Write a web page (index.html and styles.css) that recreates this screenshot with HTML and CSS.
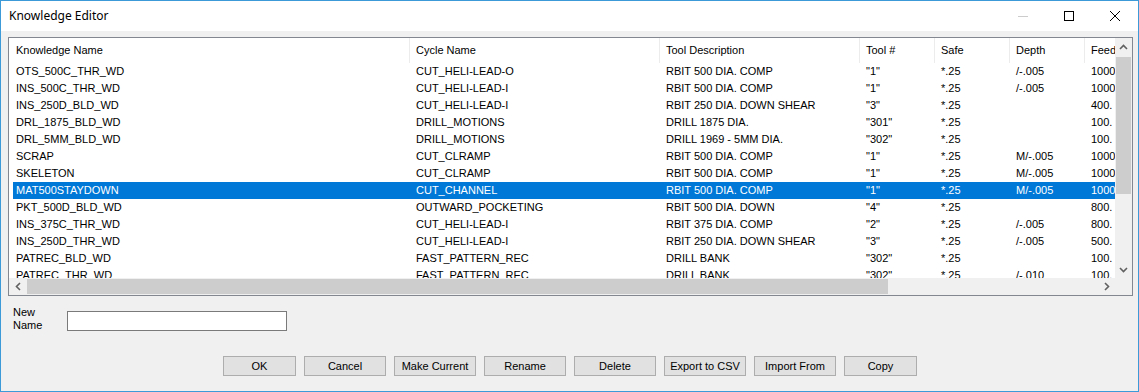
FILE: index.html
```html
<!DOCTYPE html>
<html lang="en">

<head>
    <meta charset="UTF-8">
    <meta name="viewport" content="width=device-width, initial-scale=1.0">
    <title>Knowledge Editor</title>
    <link rel="stylesheet" href="styles.css">
</head>

<body>
    <div class="window">
        <!-- Title bar -->
        <div class="titlebar">
            <span class="title">Knowledge Editor</span>
            <div class="caption">
                <span class="cap disabled">
                    <svg width="10" height="10" viewBox="0 0 10 10"><path d="M0 5.5h10" stroke="#cccccc" stroke-width="1"/></svg>
                </span>
                <span class="cap">
                    <svg width="10" height="10" viewBox="0 0 10 10"><rect x="0.5" y="0.5" width="9" height="9" fill="none" stroke="#000" stroke-width="1"/></svg>
                </span>
                <span class="cap">
                    <svg width="10" height="10" viewBox="0 0 10 10"><path d="M0 0L10 10M10 0L0 10" stroke="#000" stroke-width="1"/></svg>
                </span>
            </div>
        </div>

        <div class="dialog">
            <!-- List view -->
            <div class="listview">
                <div class="viewport">
                    <div class="row head">
                        <div>Knowledge Name</div>
                        <div>Cycle Name</div>
                        <div>Tool Description</div>
                        <div>Tool #</div>
                        <div>Safe</div>
                        <div>Depth</div>
                        <div>Feed</div>
                    </div>
                    <div class="rows" id="rows"></div>
                </div>
                <div class="vscroll">
                    <span class="arrow">
                        <svg width="9" height="6" viewBox="0 0 9 6"><path d="M1 5L4.5 1.5L8 5" fill="none" stroke="#606060" stroke-width="1.6"/></svg>
                    </span>
                    <div class="vtrack"><div class="vthumb"></div></div>
                    <span class="arrow">
                        <svg width="9" height="6" viewBox="0 0 9 6"><path d="M1 1L4.5 4.5L8 1" fill="none" stroke="#606060" stroke-width="1.6"/></svg>
                    </span>
                </div>
                <div class="hscroll">
                    <span class="arrow">
                        <svg width="6" height="9" viewBox="0 0 6 9"><path d="M5 1L1.5 4.5L5 8" fill="none" stroke="#606060" stroke-width="1.6"/></svg>
                    </span>
                    <div class="htrack"><div class="hthumb"></div></div>
                    <span class="arrow">
                        <svg width="6" height="9" viewBox="0 0 6 9"><path d="M1 1L4.5 4.5L1 8" fill="none" stroke="#606060" stroke-width="1.6"/></svg>
                    </span>
                </div>
                <div class="corner"></div>
            </div>

            <!-- New name -->
            <div class="newname">
                <label for="nname">New<br>Name</label>
                <input type="text" id="nname">
            </div>

            <!-- Buttons -->
            <div class="buttons">
                <button class="short">OK</button>
                <button>Cancel</button>
                <button>Make Current</button>
                <button>Rename</button>
                <button>Delete</button>
                <button>Export to CSV</button>
                <button>Import From</button>
                <button class="short">Copy</button>
            </div>
        </div>
    </div>

    <script>
        //Rows of the list
        var data = [
            ["OTS_500C_THR_WD", "CUT_HELI-LEAD-O", "RBIT 500 DIA. COMP", "\"1\"", "*.25", "/-.005", "1000."],
            ["INS_500C_THR_WD", "CUT_HELI-LEAD-I", "RBIT 500 DIA. COMP", "\"1\"", "*.25", "/-.005", "1000."],
            ["INS_250D_BLD_WD", "CUT_HELI-LEAD-I", "RBIT 250 DIA. DOWN SHEAR", "\"3\"", "*.25", "", "400."],
            ["DRL_1875_BLD_WD", "DRILL_MOTIONS", "DRILL 1875 DIA.", "\"301\"", "*.25", "", "100."],
            ["DRL_5MM_BLD_WD", "DRILL_MOTIONS", "DRILL 1969 - 5MM DIA.", "\"302\"", "*.25", "", "100."],
            ["SCRAP", "CUT_CLRAMP", "RBIT 500 DIA. COMP", "\"1\"", "*.25", "M/-.005", "1000."],
            ["SKELETON", "CUT_CLRAMP", "RBIT 500 DIA. COMP", "\"1\"", "*.25", "M/-.005", "1000."],
            ["MAT500STAYDOWN", "CUT_CHANNEL", "RBIT 500 DIA. COMP", "\"1\"", "*.25", "M/-.005", "1000."],
            ["PKT_500D_BLD_WD", "OUTWARD_POCKETING", "RBIT 500 DIA. DOWN", "\"4\"", "*.25", "", "800."],
            ["INS_375C_THR_WD", "CUT_HELI-LEAD-I", "RBIT 375 DIA. COMP", "\"2\"", "*.25", "/-.005", "800."],
            ["INS_250D_THR_WD", "CUT_HELI-LEAD-I", "RBIT 250 DIA. DOWN SHEAR", "\"3\"", "*.25", "/-.005", "500."],
            ["PATREC_BLD_WD", "FAST_PATTERN_REC", "DRILL BANK", "\"302\"", "*.25", "", "100."],
            ["PATREC_THR_WD", "FAST_PATTERN_REC", "DRILL BANK", "\"302\"", "*.25", "/-.010", "100."]
        ];
        var selected = 7;
        var rows = document.getElementById("rows");
        for (let i = 0; i < data.length; i++) {
            var row = document.createElement("div");
            row.className = i == selected ? "row sel" : "row";
            for (let j = 0; j < data[i].length; j++) {
                var cell = document.createElement("div");
                cell.textContent = data[i][j];
                row.appendChild(cell);
            }
            rows.appendChild(row);
        }
    </script>
</body>

</html>
```

FILE: styles.css
```css
body {
    margin: 0;
    padding: 0;
    font-family: "Liberation Sans", Arial, sans-serif;
    font-size: 11px;
    color: #000;
}

* {
    box-sizing: border-box;
}

.window {
    width: 1139px;
    height: 392px;
    border: 1px solid #3c9ad8;
    background-color: #f0f0f0;
    display: flex;
    flex-direction: column;
    overflow: hidden;
}

/* Title bar */
.titlebar {
    height: 30px;
    background-color: #fff;
    display: flex;
    align-items: center;
    justify-content: space-between;
}

.title {
    font-family: "Noto Sans", "Open Sans", sans-serif;
    font-size: 12px;
    padding-left: 8px;
    padding-bottom: 1px;
}

.caption {
    display: flex;
    height: 100%;
}

.cap {
    width: 46px;
    height: 100%;
    display: flex;
    align-items: center;
    justify-content: center;
}

.dialog {
    padding: 6px 5px 0 7px;
}

/* List view */
.listview {
    width: 1125px;
    height: 259px;
    border: 1px solid #828790;
    background-color: #fff;
    display: grid;
    grid-template-columns: 1fr 17px;
    grid-template-rows: 1fr 17px;
}

.viewport {
    overflow: hidden;
    padding-left: 4px;
}

.row {
    display: grid;
    grid-template-columns: 397px 250px 200px 75px 75px 75px 75px;
    height: 17px;
    align-items: center;
    white-space: nowrap;
}

.row div {
    padding-left: 6px;
    padding-bottom: 1px;
    overflow: hidden;
}

.row div:first-child {
    padding-left: 3px;
}

.row.head {
    height: 25px;
    align-items: stretch;
}

.row.head div {
    display: flex;
    align-items: center;
    border-right: 1px solid #ececec;
}

.row.sel {
    background-color: #0078d7;
    color: #fff;
}

/* Scroll bars */
.vscroll {
    background-color: #f0f0f0;
    display: flex;
    flex-direction: column;
}

.vscroll .arrow {
    height: 17px;
    display: flex;
    align-items: center;
    justify-content: center;
}

.vtrack {
    flex: 1;
    padding: 1px;
}

.vthumb {
    height: 137px;
    margin-top: 1px;
    background-color: #cdcdcd;
}

.hscroll {
    background-color: #f0f0f0;
    display: flex;
}

.hscroll .arrow {
    width: 17px;
    display: flex;
    align-items: center;
    justify-content: center;
}

.htrack {
    flex: 1;
    padding: 1px;
}

.hthumb {
    width: 861px;
    height: 100%;
    background-color: #cdcdcd;
}

.corner {
    background-color: #f0f0f0;
}

/* New name */
.newname {
    display: flex;
    align-items: flex-start;
    margin-top: 10px;
    padding-left: 5px;
}

.newname label {
    width: 54px;
    line-height: 13px;
}

.newname input {
    width: 220px;
    height: 20px;
    margin-top: 5px;
    border: 1px solid #7a7a7a;
    background-color: #fff;
    font: inherit;
}

/* Buttons */
.buttons {
    display: flex;
    gap: 8px;
    margin-top: 24px;
    padding-left: 215px;
}

button {
    width: 82px;
    height: 20px;
    padding: 0;
    font: inherit;
    font-size: 11px;
    color: #000;
    background-color: #e1e1e1;
    border: 1px solid #adadad;
}

button.short {
    width: 73px;
}
```
